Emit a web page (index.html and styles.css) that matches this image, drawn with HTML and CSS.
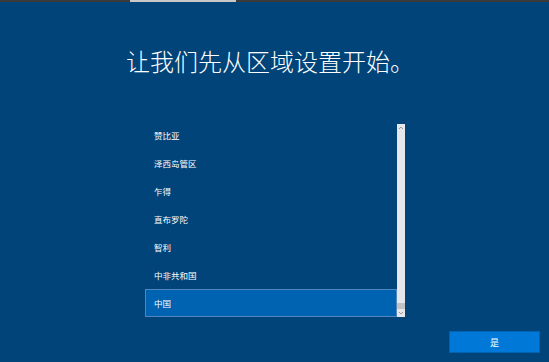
FILE: index.html
```html
<!DOCTYPE html>
<html>
	<head>
		<title>区域</title>
		<link rel="stylesheet" href="styles.css">
	</head>
	<body>
		<div id="progress"><div id="progressDone"></div></div>
		<h1 id="heading">让我们先从区域设置开始。</h1>
		<div id="regionList">
			<div id="regionRows">
				<div class="row">赞比亚</div>
				<div class="row">泽西岛管区</div>
				<div class="row">乍得</div>
				<div class="row">直布罗陀</div>
				<div class="row">智利</div>
				<div class="row">中非共和国</div>
				<div class="row selected">中国</div>
			</div>
			<div id="scrollbar">
				<svg class="arrow" width="8" height="8" viewBox="0 0 8 8"><path d="M2 5 L4 3 L6 5" fill="none" stroke="#9a9a9a" stroke-width="1"/></svg>
				<div class="track"></div>
				<div class="thumb"></div>
				<svg class="arrow" width="8" height="8" viewBox="0 0 8 8"><path d="M2 3 L4 5 L6 3" fill="none" stroke="#9a9a9a" stroke-width="1"/></svg>
			</div>
		</div>
		<div id="footer">
			<input id="yes" class="button" type="button" value="是" />
		</div>
	</body>
</html>
```

FILE: styles.css
```css
body {
	margin: 0;
	padding: 0;
	overflow: hidden;
	height: 362px;
	background-color: #00447a;
	color: white;
	font-family: "Noto Sans CJK SC", "Noto Sans", sans-serif;
	display: flex;
	flex-direction: column;
}
#progress {
	height: 2px;
	background-color: #3a3a3a;
	padding-left: 130px;
}
#progressDone {
	width: 106px;
	height: 100%;
	background-color: #c8c8c8;
}
#heading {
	margin: 43px 0 0 0;
	padding-right: 9px;
	font-size: 24px;
	font-weight: 300;
	line-height: 32px;
	text-align: center;
}
#regionList {
	margin: 47px auto 0 145px;
	width: 260px;
	height: 193px;
	display: flex;
	overflow: hidden;
}
#regionRows {
	width: 252px;
	margin-top: -3px;
}
.row {
	height: 28px;
	line-height: 28px;
	padding-left: 9px;
	font-size: 8.5px;
	box-sizing: border-box;
}
.row.selected {
	background-color: #0063b1;
	border: 1px solid #4f86bd;
	padding-left: 8px;
	line-height: 26px;
}
#scrollbar {
	width: 8px;
	background-color: #e6e7ea;
	display: flex;
	flex-direction: column;
}
#scrollbar .arrow {
	display: block;
	flex: none;
}
#scrollbar .track {
	flex: 1;
}
#scrollbar .thumb {
	height: 6px;
	background-color: #c2c2c2;
}
#footer {
	display: flex;
	justify-content: flex-end;
	padding: 14px 9px 0 0;
}
input.button {
	width: 91px;
	height: 22px;
	margin: 0;
	padding: 0;
	background-color: #0078d7;
	border: 1px solid #0063b1;
	color: white;
	font-family: "Noto Sans CJK SC", sans-serif;
	font-size: 9px;
}
```
